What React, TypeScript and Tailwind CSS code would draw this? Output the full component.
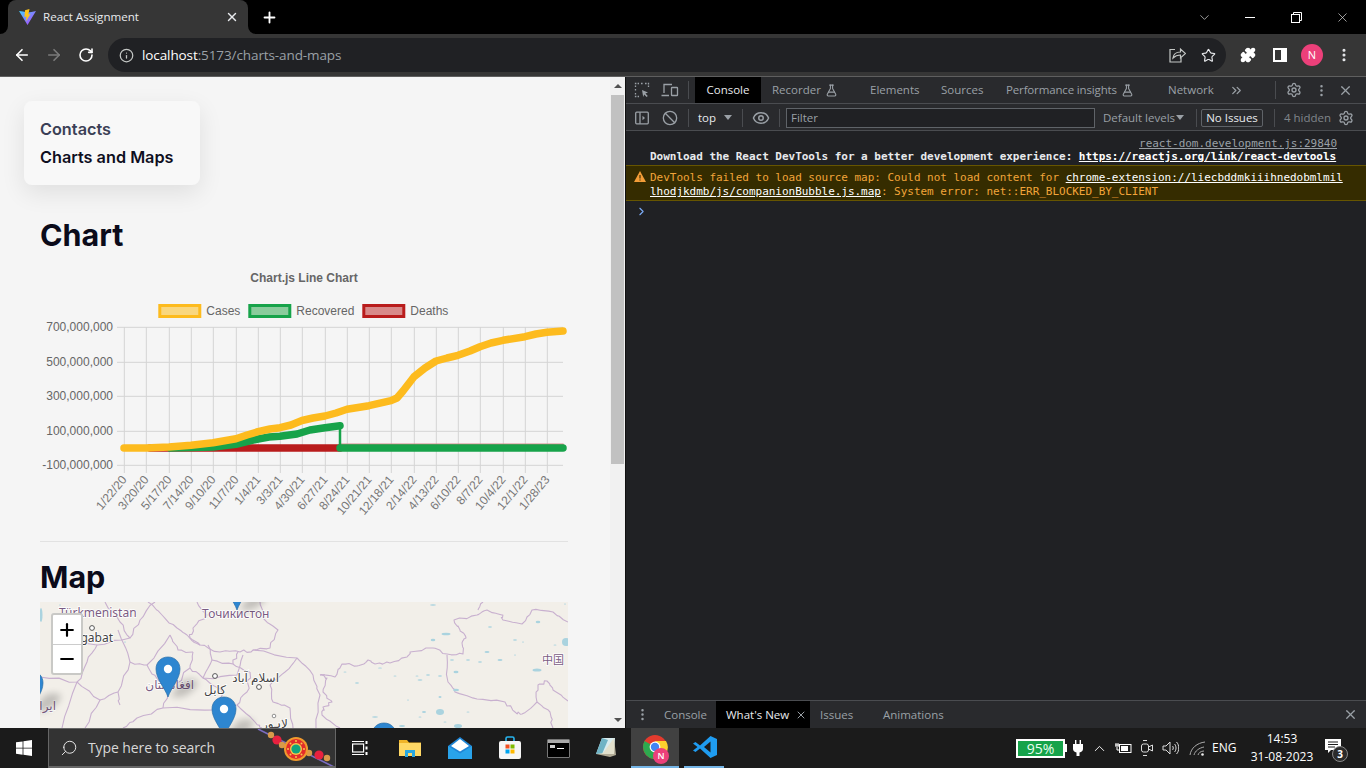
import {
  ArrowLeft,
  ArrowRight,
  Ban,
  ChevronDown,
  ChevronRight,
  ChevronUp,
  ChevronsRight,
  Eye,
  FlaskConical,
  Info,
  Minus,
  MoreVertical,
  Plus,
  Puzzle,
  RotateCw,
  Search,
  Settings,
  Star,
  X,
} from "lucide-react";

const mono = "font-['DejaVu_Sans_Mono','Liberation_Mono',monospace]";

const tickX = [124.3, 146.3, 169.3, 191.3, 213.3, 236.3, 258.3, 280.3, 302.3, 325.3, 347.3, 369.3, 391.3, 414.3, 436.3, 458.3, 480.3, 503.3, 525.3, 547.3];
const tickLabels = ["1/22/20", "3/20/20", "5/17/20", "7/14/20", "9/10/20", "11/7/20", "1/4/21", "3/3/21", "4/30/21", "6/27/21", "8/24/21", "10/21/21", "12/18/21", "2/14/22", "4/13/22", "6/10/22", "8/7/22", "10/4/22", "12/1/22", "1/28/23"];
const yTicks = [
  { y: 327.3, label: "700,000,000" },
  { y: 362.3, label: "500,000,000" },
  { y: 396.3, label: "300,000,000" },
  { y: 431.3, label: "100,000,000" },
  { y: 465.3, label: "-100,000,000" },
];
const legend = [
  { x: 158.3, label: "Cases", stroke: "#fdbb1e", fill: "#f9d77f" },
  { x: 248.3, label: "Recovered", stroke: "#17a34a", fill: "#8acc9c" },
  { x: 362.3, label: "Deaths", stroke: "#b91c1c", fill: "#d88a8a" },
];

const casesLine = "124,448 146,448 169,447 191,445.3 213,442.7 236,438.7 247,435 258,431.7 270,429 280,427.7 291,425 302,420.5 313,418 325,416 336,413 347,409.3 369,405.7 391,400.7 397,398 403,391 414,376.7 425,368 436,361 447,358 458,355.3 470,351 480,346.7 491,343 503,340.3 525,336.7 536,334 547,332.3 563,331";
const recoveredLine = "170,448 191,447.5 213,447 236,444.3 258,439 269,437 280,436.3 297,434 310,430 325,427.7 340,425.7";

function Chart() {
  return (
    <svg width="528" height="270" viewBox="40 265 528 270" className="block">
      <text x="304" y="282" textAnchor="middle" fontSize="12" fontWeight="700" fill="#666" fontFamily="Liberation Sans">
        Chart.js Line Chart
      </text>
      {legend.map((item) => (
        <g key={item.label}>
          <rect x={item.x + 1.5} y="305.5" width="40" height="11" fill={item.fill} stroke={item.stroke} strokeWidth="3" />
          <text x={item.x + 48} y="315" fontSize="12" fill="#666" fontFamily="Liberation Sans">
            {item.label}
          </text>
        </g>
      ))}
      {tickX.map((x) => (
        <line key={x} x1={x} x2={x} y1="327" y2="473" stroke="#d4d4d4" strokeWidth="1" />
      ))}
      {yTicks.map((t) => (
        <g key={t.label}>
          <line x1="117" x2="563" y1={t.y} y2={t.y} stroke="#d4d4d4" strokeWidth="1" />
          <text x="113" y={t.y + 4} textAnchor="end" fontSize="12" fill="#666" fontFamily="Liberation Sans">
            {t.label}
          </text>
        </g>
      ))}
      {tickX.map((x, i) => (
        <text key={tickLabels[i]} textAnchor="end" fontSize="12" fill="#777" fontFamily="Liberation Sans" transform={`translate(${x + 3} 480) rotate(-50)`}>
          {tickLabels[i]}
        </text>
      ))}
      <g fill="none" strokeLinecap="round" strokeLinejoin="round">
        <polyline points="150,448 340,448" stroke="#b91c1c" strokeWidth="7.5" />
        <polyline points="340,444.5 563,444.5" stroke="#d88a8a" strokeWidth="2" />
        <polyline points={recoveredLine} stroke="#17a34a" strokeWidth="7.5" />
        <polyline points="340,426 340,448" stroke="#17a34a" strokeWidth="2.5" />
        <polyline points="340,448 563,448" stroke="#17a34a" strokeWidth="7.5" />
        <polyline points={casesLine} stroke="#fdbb1e" strokeWidth="7.5" />
      </g>
    </svg>
  );
}

const borders = [
  "320,675 335,677 342,664 357,666 368,660 375,664 390,663 407,657 410,652 433,648 447,654 463,654 462,643 466,638 460,630 454,620 477,615 487,610 502,615 503,620 522,624 532,610 553,612 568,622",
  "483,602 478,610",
  "447,655 448,682 455,692 477,699 505,702 515,712 522,714 537,702 538,685 547,681 553,690 568,701",
  "537,702 550,712 553,728",
  "320,675 327,678 323,692 332,702 323,707 322,715 340,728",
  "148,602 162,615 177,628 187,635 200,645 220,652 240,652 253,650 270,648 278,630 263,618 260,602",
  "197,602 207,615 193,628 190,638 200,645",
  "118,692 130,662 147,665 170,635",
  "120,705 118,692",
  "193,652 190,668 203,678 237,675 243,655",
  "250,672 247,692 237,705 217,710 163,708 137,718 123,728",
  "253,650 297,658 313,675 320,695 316,728",
  "270,685 273,702 290,708 293,728",
  "105,602 120,622 130,638 97,645 87,662 77,682 40,677",
  "130,662 118,630",
  "77,682 62,728",
  "203,678 212,660 233,664 250,672",
  "163,708 170,690 190,668",
  "170,635 178,650 193,652",
  "147,665 158,680 170,690",
  "212,660 208,645",
  "233,664 238,652",
  "217,710 222,690 203,678",
  "237,705 255,722 262,728",
  "297,658 285,672 270,685",
  "155,602 140,620 130,638",
  "100,700 118,692",
  "60,640 97,645",
  "85,728 100,700 77,682",
];

// the borders on the tiles are never straight, so break each segment up a little
function wiggle(points: string, seed: number) {
  const pts = points.split(" ").map((p) => p.split(",").map(Number));
  const out: string[] = [];
  pts.forEach(([x, y], i) => {
    out.push(`${x},${y}`);
    const next = pts[i + 1];
    if (!next) return;
    for (let k = 1; k < 4; k++) {
      const n = Math.sin((i + 1) * 12.9898 + k * 78.233 + seed * 37.7) * 43758.5453;
      const dx = (n - Math.floor(n) - 0.5) * 3;
      const dy = (n * 3 - Math.floor(n * 3) - 0.5) * 3;
      out.push(`${x + ((next[0] - x) * k) / 4 + dx},${y + ((next[1] - y) * k) / 4 + dy}`);
    }
  });
  return out.join(" ");
}

const lakes = [
  [446, 634, 4.5, 1.3], [433, 640, 2.3, 1.2], [538, 622, 2.3, 1.3], [566, 642, 4, 4], [537, 670, 4.5, 1.6],
  [433, 605, 3, 0.8], [487, 652, 2.5, 1], [456, 672, 2.5, 1.3], [440, 676, 2, 0.8], [500, 660, 2.5, 1],
  [357, 683, 2, 0.8], [440, 712, 4, 3], [424, 712, 2, 1], [375, 717, 3, 0.8], [402, 726, 3, 1], [458, 726, 4, 2],
  [490, 627, 2, 0.8], [515, 640, 2, 0.8], [428, 675, 2, 0.8], [456, 690, 3, 1.3], [480, 662, 2, 0.8], [41, 615, 1.5, 7],
  [395, 676, 1.5, 0.6], [417, 676, 1.5, 0.6], [440, 697, 1.5, 1], [345, 672, 1.5, 0.6], [380, 668, 2, 0.6], [420, 680, 2.5, 0.7],
  [408, 700, 1, 0.6], [468, 712, 1.5, 0.6], [420, 717, 1.5, 0.6], [445, 722, 1.5, 0.6], [468, 660, 2, 0.7], [452, 660, 2, 0.7],
  [515, 655, 1, 0.6], [523, 642, 1, 0.6], [555, 645, 1.5, 0.6], [565, 604, 1, 0.6], [60, 605, 1, 0.6], [125, 642, 1, 0.6],
];

function MapPin({ x, y }: { x: number; y: number }) {
  return (
    <g transform={`translate(${x} ${y})`}>
      <path d="M2 40 L14 24 Q26 20 30 25 Q28 34 14 40 Z" fill="#000" opacity="0.2" filter="url(#pinShadow)" />
      <path d="M0 40 C-3 31 -12 22 -12 12 C-12 5 -7 0 0 0 C7 0 12 5 12 12 C12 22 3 31 0 40 Z" fill="#2e86d0" stroke="#2a6ea8" strokeWidth="0.7" />
      <circle cx="0" cy="12" r="4.2" fill="#fff" />
    </g>
  );
}

function MapLabel({ x, y, color = "#7b5c83", size = 12, anchor = "start", children }: { x: number; y: number; color?: string; size?: number; anchor?: "start" | "middle" | "end"; children: string }) {
  return (
    <text x={x} y={y} fontSize={size} fill={color} textAnchor={anchor} stroke="#fff" strokeWidth="1.5" paintOrder="stroke" fontFamily="Noto Sans, DejaVu Sans, Noto Sans CJK SC, sans-serif">
      {children}
    </text>
  );
}

function MapView() {
  return (
    <div className="relative w-[528px] h-[160px] bg-[#f2efe9]">
      <svg width="528" height="160" viewBox="40 602 528 160" className="block">
        <defs>
          <filter id="pinShadow" x="-50%" y="-50%" width="200%" height="200%">
            <feGaussianBlur stdDeviation="3.5" />
          </filter>
        </defs>
        <g fill="none" stroke="#c8b0cf" strokeWidth="1.1" strokeLinejoin="round">
          {borders.map((d, i) => (
            <polyline key={d} points={wiggle(d, i)} />
          ))}
        </g>
        <g fill="#aad3df">
          {lakes.map(([x, y, rx, ry]) => (
            <ellipse key={`${x}-${y}`} cx={x} cy={y} rx={rx} ry={ry} />
          ))}
        </g>
        <MapLabel x={59} y={617} size={12}>Türkmenistan</MapLabel>
        <MapLabel x={202} y={618} size={12}>Точикистон</MapLabel>
        <MapLabel x={113} y={642} anchor="end" color="#444">Aşgabat</MapLabel>
        <MapLabel x={194} y={689} anchor="end">افغانستان</MapLabel>
        <MapLabel x={215} y={694} anchor="middle" color="#444">کابل</MapLabel>
        <MapLabel x={279} y={682} anchor="end" color="#444">اسلام آباد</MapLabel>
        <MapLabel x={56} y={710} anchor="end">ایرا</MapLabel>
        <MapLabel x={275} y={728} anchor="middle" color="#444">لاہور</MapLabel>
        <MapLabel x={542} y={664} size={11}>中国</MapLabel>
        <circle cx="92" cy="628" r="2.4" fill="#fff" stroke="#555" strokeWidth="1" />
        <circle cx="215" cy="676" r="2.4" fill="#fff" stroke="#555" strokeWidth="1" />
        <circle cx="259" cy="687" r="2.4" fill="#fff" stroke="#555" strokeWidth="1" />
        <circle cx="274" cy="716" r="1.8" fill="#fff" stroke="#777" strokeWidth="0.8" />
        <MapPin x={237} y={570} />
        <MapPin x={168} y={657} />
        <MapPin x={224} y={697} />
        <MapPin x={384} y={723} />
        <MapPin x={31} y={671} />
      </svg>
      <div className="absolute left-[11px] top-[11px] w-[32px] h-[62px] bg-white rounded-[3px] border-2 border-[#c9c9c6] flex flex-col text-black">
        <div className="h-[30px] flex items-center justify-center border-b border-[#ccc]">
          <Plus size={20} strokeWidth={2.6} />
        </div>
        <div className="flex-1 flex items-center justify-center">
          <Minus size={20} strokeWidth={2.6} />
        </div>
      </div>
    </div>
  );
}

function Page() {
  return (
    <div className="w-[626px] h-full flex bg-[#f5f5f5] border-r border-[#111]">
      <div className="w-[610px] h-full overflow-hidden font-['Inter',sans-serif]">
        <div className="ml-6 mt-6 w-[176px] h-[84px] bg-[#f8f8f8] rounded-lg shadow-[0_8px_24px_rgba(0,0,0,0.09)] px-4 pt-[14px] text-[16.25px] font-semibold leading-[28px]">
          <div className="text-[#3b3f56]">Contacts</div>
          <div className="text-[#0f0f1e]">Charts and Maps</div>
        </div>
        <div className="ml-10 w-[528px]">
          <h1 className="mt-[30px] text-[30.5px] leading-[40px] font-bold text-[#0b0b1a]">Chart</h1>
          <div className="mt-[10px]">
            <Chart />
          </div>
          <div className="mt-[6px] border-t border-[#e2e2e2]" />
          <h2 className="mt-[15px] text-[30.5px] leading-[40px] font-bold text-[#0b0b1a]">Map</h2>
          <div className="mt-[5px]">
            <MapView />
          </div>
        </div>
      </div>
      <div className="w-[15px] h-full bg-[#f1f1f1] flex flex-col items-center">
        <div className="h-[18px] flex items-center justify-center">
          <div className="w-0 h-0 border-x-[4px] border-x-transparent border-b-[4px] border-b-[#505050]" />
        </div>
        <div className="w-[13px] h-[369px] bg-[#c1c1c1]" />
        <div className="flex-1" />
        <div className="h-[17px] flex items-center justify-center">
          <div className="w-0 h-0 border-x-[4px] border-x-transparent border-t-[4px] border-t-[#505050]" />
        </div>
      </div>
    </div>
  );
}

function Divider({ className }: { className: string }) {
  return <div className={`w-px h-[18px] bg-[#4a4c50] ${className}`} />;
}

function DevTools() {
  return (
    <div className="flex-1 h-full flex flex-col bg-[#202124] text-[#9aa0a6] font-['Open_Sans',sans-serif] text-[11.5px] min-w-0">
      <div className="h-[27px] bg-[#292a2d] border-b border-[#4a4c50] flex items-center shrink-0">
        <svg width="16" height="16" viewBox="0 0 16 16" fill="none" stroke="#9aa0a6" strokeWidth="1.3" className="ml-2">
          <path d="M1.5 5V1.5H5M7 1.5h2M11 1.5h3.5V5M1.5 7v2M1.5 11v3.5H5" strokeDasharray="1.6 1.2" />
          <path d="M8 8l6 2.4-2.6 1 2.4 2.6-1.2 1-2.4-2.6-1 2.6z" fill="#9aa0a6" stroke="none" />
        </svg>
        <svg width="18" height="16" viewBox="0 0 18 16" fill="none" stroke="#9aa0a6" strokeWidth="1.3" className="ml-[11px]">
          <path d="M3 11V2.5h8M.5 13.5H8" />
          <rect x="10.5" y="5.5" width="6" height="8" rx="0.6" />
        </svg>
        <Divider className="ml-[9px]" />
        <div className="ml-[6px] w-[66px] h-full bg-black text-[#e8eaed] flex items-center justify-center">Console</div>
        <div className="ml-[11px] w-[47px]">Recorder</div>
        <FlaskConical size={13} className="ml-[6px]" />
        <div className="ml-[32px] w-[48px]">Elements</div>
        <div className="ml-[23px] w-[42px]">Sources</div>
        <div className="ml-[23px] w-[111px] whitespace-nowrap tracking-[-0.15px]">Performance insights</div>
        <FlaskConical size={13} className="ml-[4px]" />
        <div className="ml-[34px] w-[46px]">Network</div>
        <ChevronsRight size={15} className="ml-[15px]" />
        <Divider className="ml-[31px]" />
        <Settings size={16} className="ml-[10px]" />
        <MoreVertical size={15} className="ml-[12px]" />
        <X size={15} className="ml-[9px]" />
      </div>
      <div className="h-[27px] pt-px bg-[#292a2d] border-b border-[#4a4c50] flex items-center shrink-0">
        <svg width="14" height="14" viewBox="0 0 14 14" fill="none" stroke="#9aa0a6" strokeWidth="1.3" className="ml-[9px]">
          <rect x="0.7" y="1.2" width="12.6" height="11.6" rx="1" />
          <path d="M5 1.2v11.6" />
          <path d="M7.5 4.8L10 7l-2.5 2.2z" fill="#9aa0a6" stroke="none" />
        </svg>
        <Ban size={16} className="ml-[13px]" />
        <Divider className="ml-[10px]" />
        <div className="ml-[9px] w-[20px] text-[#e8eaed]">top</div>
        <div className="ml-[6px] w-0 h-0 border-x-[4px] border-x-transparent border-t-[5px] border-t-[#9aa0a6]" />
        <Divider className="ml-[10px]" />
        <Eye size={18} className="ml-[9px]" />
        <Divider className="ml-[9px]" />
        <div className="ml-[6px] w-[309px] h-[20px] bg-[#202124] border border-[#5f6368] px-[4px] flex items-center text-[#9aa0a6]">Filter</div>
        <div className="ml-[8px] w-[71px] whitespace-nowrap">Default levels</div>
        <div className="ml-[2px] w-0 h-0 border-x-[4px] border-x-transparent border-t-[5px] border-t-[#9aa0a6]" />
        <Divider className="ml-[12px]" />
        <div className="ml-[4px] w-[62px] h-[18px] border border-[#5f6368] rounded-[2px] text-[#e8eaed] flex items-center justify-center">No Issues</div>
        <Divider className="ml-[11px]" />
        <div className="ml-[9px] w-[47px] whitespace-nowrap text-[#80868b]">4 hidden</div>
        <Settings size={16} className="ml-[7px]" />
      </div>

      <div className={`flex-1 min-h-0 ${mono} text-[11px] leading-[14px] tracking-[-0.025px]`}>
        <div className="h-[34px] pt-[6px] pl-[24px] pr-[29px]">
          <div className="h-[13px] text-right text-[#9aa0a6] underline">react-dom.development.js:29840</div>
          <div className="whitespace-nowrap font-bold text-[#e8eaed]">
            Download the React DevTools for a better development experience: <span className="underline text-white">https://reactjs.org/link/react-devtools</span>
          </div>
        </div>
        <div className="h-[36px] bg-[#352c00] border-y border-[#665500] text-[#f2a53a] pl-[24px] pt-[5px] relative">
          <svg width="12" height="11" viewBox="0 0 12 11" className="absolute left-[8px] top-[5px]">
            <path d="M6 0l6 11H0z" fill="#f29d38" />
            <path d="M5.4 4h1.2v3.6H5.4zM5.4 8.4h1.2v1.2H5.4z" fill="#3c3000" />
          </svg>
          <div className="whitespace-nowrap">
            DevTools failed to load source map: Could not load content for <span className="underline text-white">chrome-extension://liecbddmkiiihnedobmlmil</span>
          </div>
          <div className="whitespace-nowrap">
            <span className="underline text-white">lhodjkdmb/js/companionBubble.js.map</span>: System error: net::ERR_BLOCKED_BY_CLIENT
          </div>
        </div>
        <div className="pl-[9px] pt-[4px] text-[#7cacf8]">
          <ChevronRight size={13} />
        </div>
      </div>

      <div className="h-[28px] bg-[#292a2d] border-t border-[#4a4c50] flex items-center shrink-0">
        <MoreVertical size={15} className="ml-[9px]" />
        <div className="ml-[14px] w-[42px]">Console</div>
        <div className="ml-[10px] w-[94px] h-full bg-black text-[#e8eaed] flex items-center pl-[10px] whitespace-nowrap">
          What's New
          <X size={12} className="ml-[6px] text-[#9aa0a6]" />
        </div>
        <div className="ml-[10px] w-[31px]">Issues</div>
        <div className="ml-[32px] w-[60px]">Animations</div>
        <X size={15} className="ml-[400px]" />
      </div>
    </div>
  );
}

function ChromeBar() {
  return (
    <>
      <div className="h-[34px] bg-black flex items-end shrink-0 font-['Open_Sans',sans-serif] text-white">
        <div className="relative ml-2 w-[240px] h-[34px] bg-[#363636] rounded-t-lg flex items-center pl-[11px]">
          <svg width="17" height="16" viewBox="0 0 17 16">
            <defs>
              <linearGradient id="viteBody" x1="0" y1="0" x2="1" y2="1">
                <stop offset="0" stopColor="#41d1ff" />
                <stop offset="1" stopColor="#bd34fe" />
              </linearGradient>
            </defs>
            <path d="M0 2l8.5 14L17 2l-4.5 1L8.5 3.5 4 2.5z" fill="url(#viteBody)" />
            <path d="M10.5 0L6 1.2 5.5 8l2-.4-.6 4.6L11.5 5l-2.2.4z" fill="#ffc517" />
          </svg>
          <span className="ml-[7px] text-[11.6px] text-[#e8eaed] whitespace-nowrap">React Assignment</span>
          <X size={14} strokeWidth={2.4} className="absolute left-[217px] text-[#e8eaed]" />
          <div className="absolute -left-2 bottom-0 w-2 h-2 bg-[#363636]">
            <div className="w-2 h-2 bg-black rounded-br-lg" />
          </div>
          <div className="absolute -right-2 bottom-0 w-2 h-2 bg-[#363636]">
            <div className="w-2 h-2 bg-black rounded-bl-lg" />
          </div>
        </div>
        <Plus size={17} strokeWidth={2.6} className="ml-[13px] mb-[8px]" />
        <div className="flex-1" />
        <div className="h-[34px] flex items-center text-[#e0e0e0]">
          <ChevronDown size={15} strokeWidth={1.1} className="mr-[33px]" />
          <div className="w-[10px] h-px bg-white mr-[36px]" />
          <svg width="11" height="11" viewBox="0 0 11 11" fill="none" stroke="#fff" strokeWidth="1" className="mr-[33px]">
            <rect x="0.5" y="2.5" width="8" height="8" />
            <path d="M2.5 2.5V.5h8v8h-2" />
          </svg>
          <X size={15} strokeWidth={1.1} className="mr-[16px]" />
        </div>
      </div>
      <div className="h-[43px] bg-[#363636] border-b border-[#5f5f5f] flex items-center shrink-0 font-['Open_Sans',sans-serif]">
        <ArrowLeft size={18} strokeWidth={2.2} className="ml-[13px] text-white" />
        <ArrowRight size={18} strokeWidth={2.2} className="ml-[14px] text-[#7b7b7b]" />
        <RotateCw size={16} strokeWidth={2.4} className="ml-[15px] text-white" />
        <div className="ml-[14px] w-[1118px] h-[34px] rounded-full bg-[#202124] flex items-center">
          <Info size={15} className="ml-[11px] text-[#c4c7c5]" />
          <div className="ml-[8px] text-[13.5px] tracking-[-0.1px] text-[#9aa0a6] whitespace-nowrap">
            <span className="text-white">localhost</span>:5173/charts-and-maps
          </div>
          <div className="flex-1" />
          <svg width="17" height="16" viewBox="0 0 17 16" fill="none" stroke="#c4c7c5" strokeWidth="1.2">
            <path d="M6 2.5H1v12.5h11v-4" />
            <path d="M4 11c.5-4 3.5-6 7.5-6V2l5 4.5-5 4.5V8c-3 0-5.5 1-7.5 3z" />
          </svg>
          <Star size={15} strokeWidth={1.8} className="ml-[15px] mr-[10px] text-[#e8eaed]" />
        </div>
        <Puzzle size={16} fill="#fff" className="ml-[14px] text-white" />
        <svg width="14" height="14" viewBox="0 0 14 14" className="ml-[17px]">
          <rect x="0" y="0" width="14" height="14" fill="#fff" />
          <rect x="2" y="2" width="6" height="10" fill="#363636" />
        </svg>
        <div className="ml-[14px] w-[22px] h-[22px] rounded-full bg-[#ec407a] text-white text-[11px] flex items-center justify-center">N</div>
        <MoreVertical size={16} strokeWidth={2.6} className="ml-[13px] text-[#e8eaed]" />
      </div>
    </>
  );
}

function Rakhi() {
  return (
    <svg width="80" height="40" viewBox="256 728 80 40" className="absolute left-[208px] top-0">
      <path d="M257 728 L335 767" stroke="#7a6cc0" strokeWidth="1.6" fill="none" />
      <circle cx="270" cy="734" r="3.2" fill="#d89a4a" />
      <circle cx="276" cy="739" r="4.6" fill="#e8213f" />
      <circle cx="281" cy="744" r="3.2" fill="#d89a4a" />
      <circle cx="308" cy="752" r="3.2" fill="#d89a4a" />
      <circle cx="318" cy="754" r="4.6" fill="#e8213f" />
      <circle cx="326" cy="757" r="3.2" fill="#d89a4a" />
      <circle cx="295" cy="748" r="12" fill="#f09a2e" />
      <circle cx="295" cy="748" r="10" fill="#e22b2b" />
      <g fill="#f7c64a">
        <circle cx="295" cy="740" r="1" />
        <circle cx="295" cy="756" r="1" />
        <circle cx="287" cy="748" r="1" />
        <circle cx="303" cy="748" r="1" />
        <circle cx="289.5" cy="742.5" r="1" />
        <circle cx="300.5" cy="742.5" r="1" />
        <circle cx="289.5" cy="753.5" r="1" />
        <circle cx="300.5" cy="753.5" r="1" />
      </g>
      <circle cx="295" cy="748" r="6" fill="#f7c64a" />
      <circle cx="295" cy="748" r="4.6" fill="#12a37c" />
    </svg>
  );
}

function Taskbar() {
  return (
    <div className="h-[40px] bg-[#1b1b1b] flex items-center shrink-0 text-white font-['Open_Sans',sans-serif]">
      <svg width="16" height="16" viewBox="0 0 16 16" fill="#fff" className="ml-[16px]">
        <path d="M0 2.3l6.6-.9v6.3H0zM7.4 1.3L16 0v7.7H7.4zM0 8.4h6.6v6.3L0 13.8zM7.4 8.4H16V16l-8.6-1.2z" />
      </svg>
      <div className="relative ml-[16px] w-[288px] h-[40px] bg-[#333] border border-[#666] border-b-2 flex items-center overflow-hidden">
        <Search size={18} strokeWidth={1.3} className="ml-[11px] -scale-x-100 text-[#e6e6e6]" />
        <span className="ml-[10px] text-[14px] tracking-[-0.1px] text-[#d8d8d8] whitespace-nowrap">Type here to search</span>
        <Rakhi />
      </div>
      <svg width="16" height="16" viewBox="0 0 16 16" fill="none" stroke="#fff" strokeWidth="1.2" className="ml-[16px]">
        <rect x="0.6" y="4" width="11" height="8" />
        <path d="M0 1.5h12M0 14.5h12" />
        <path d="M14.5 1v3M14.5 6.5v3M14.5 12v3" strokeWidth="2" />
      </svg>
      <div className="ml-[18px] w-[48px] flex justify-center">
        <svg width="22" height="20" viewBox="0 0 22 20">
          <path d="M0 2h8l2 2.5h12V18H0z" fill="#f0b429" />
          <rect x="0" y="5" width="22" height="13" fill="#ffd865" />
          <path d="M6 19v-7h10v7h-3v-4H9v4z" fill="#2aa7e0" />
        </svg>
      </div>
      <div className="ml-[2px] w-[48px] flex justify-center">
        <svg width="24" height="22" viewBox="0 0 24 22">
          <path d="M12 0l12 9v13H0V9z" fill="#1f86d6" />
          <path d="M12 2L21 9l-9 5.5L3 9z" fill="#fff" />
          <path d="M0 9l12 7.5L24 9v13H0z" fill="#29a3ea" />
        </svg>
      </div>
      <div className="ml-[2px] w-[48px] flex justify-center">
        <svg width="24" height="24" viewBox="0 0 24 24">
          <path d="M8 6V2.5a1.5 1.5 0 011.5-1.5h5A1.5 1.5 0 0116 2.5V6" fill="none" stroke="#27b4ee" strokeWidth="1.6" />
          <rect x="1" y="5" width="22" height="18" rx="2" fill="#f6f6f6" />
          <rect x="7.5" y="8.5" width="4" height="4" fill="#f25022" />
          <rect x="12.5" y="8.5" width="4" height="4" fill="#7fba00" />
          <rect x="7.5" y="13.5" width="4" height="4" fill="#00a4ef" />
          <rect x="12.5" y="13.5" width="4" height="4" fill="#ffb900" />
        </svg>
      </div>
      <div className="w-[48px] flex justify-center">
        <div className="w-[23px] h-[19px] bg-black border border-[#777] rounded-[1px] relative overflow-hidden">
          <div className="h-[3px] bg-[#aaa]" />
          <div className="absolute left-[2px] top-[5px] w-[5px] h-[3px] bg-[#ccc]" />
          <div className="absolute left-[9px] top-[8px] w-[7px] h-px bg-white" />
        </div>
      </div>
      <div className="ml-[1px] w-[46px] flex justify-center">
        <svg width="22" height="22" viewBox="0 0 22 22">
          <path d="M7 1h13l-1 16H1z" fill="#d9ecef" />
          <path d="M7 1L1 17h6l6-14z" fill="#6fb3c5" />
          <path d="M19 1l2 17-6 2-14-3 7-1z" fill="#e4dcc0" opacity="0.75" />
        </svg>
      </div>
      <div className="ml-[2px] w-[48px] h-[40px] bg-[#414141] border-b-2 border-[#75b5e6] relative flex items-center justify-center">
        <svg width="26" height="26" viewBox="0 0 26 26">
          <circle cx="13" cy="13" r="12" fill="#e33b2e" />
          <path d="M13 13L2.6 7A12 12 0 001 13a12 12 0 0010.5 11.9z" fill="#2da94f" />
          <path d="M13 7h11a12 12 0 01-12.5 18L17 15z" fill="#fdd12e" />
          <circle cx="13" cy="13" r="5.4" fill="#fff" />
          <circle cx="13" cy="13" r="4.2" fill="#4285f4" />
        </svg>
        <div className="absolute left-[22px] top-[20px] w-[16px] h-[16px] rounded-full bg-[#ec407a] text-white text-[9px] font-semibold flex items-center justify-center">N</div>
      </div>
      <div className="ml-[5px] w-[40px] h-[40px] border-b-2 border-[#75b5e6] flex items-center justify-center">
        <svg width="24" height="24" viewBox="0 0 24 24" className="ml-[2px]">
          <path d="M17.5 1L24 4v16l-6.5 3L7 13.5 2.5 17 0 15.5 4.5 12 0 8.5 2.5 7 7 10.5z" fill="#1f9cf0" />
          <path d="M17.5 6.5L11 12l6.5 5.5z" fill="#1b1b1b" />
        </svg>
      </div>
      <div className="flex-1" />
      <div className="w-[49px] h-[19px] border-2 border-white bg-[#16a34a] text-[14px] leading-[15px] text-center text-[#e9fff0]">95%</div>
      <div className="w-[2px] h-[8px] bg-white" />
      <svg width="10" height="16" viewBox="0 0 10 16" fill="#fff" className="ml-[6px]">
        <path d="M2 0h1.4v4H6.6V0H8v4h2v5c0 2-1.5 3.2-3.5 3.4V16h-3v-3.6C1.5 12.2 0 11 0 9V4h2z" />
      </svg>
      <ChevronUp size={17} strokeWidth={1.3} className="ml-[8px]" />
      <svg width="17" height="12" viewBox="0 0 17 12" className="ml-[7px]">
        <rect x="4.5" y="2.5" width="11.5" height="8" fill="none" stroke="#fff" />
        <rect x="6" y="4" width="7" height="5" fill="#fff" />
        <path d="M0 3h4M1 1v4M3 1v4M2 5v3h3" stroke="#fff" fill="none" />
      </svg>
      <svg width="14" height="18" viewBox="0 0 14 18" fill="none" stroke="#ddd" strokeWidth="1" className="ml-[8px]">
        <rect x="1.5" y="5" width="7" height="8" rx="2" />
        <path d="M8.5 8l4-2v6l-4-2M3 1.5h4M3 16.5h4" />
      </svg>
      <svg width="17" height="14" viewBox="0 0 17 14" fill="none" stroke="#ddd" strokeWidth="1" className="ml-[8px]">
        <path d="M1 5h3l4-4v12l-4-4H1zM10.5 5c1 1 1 3 0 4M12.5 3c2 2 2 6 0 8M14.5 1c3 3 3 9 0 12" />
      </svg>
      <svg width="17" height="15" viewBox="0 0 17 15" fill="none" stroke="#aaa" strokeWidth="1" className="ml-[10px]">
        <path d="M1 14C2 7 8 2 16 1M5 14c1-4 5-7 10-8M9 14c.6-2 2.6-4 6-4" />
        <circle cx="13.5" cy="13.5" r="1.3" fill="#eee" stroke="none" />
      </svg>
      <div className="ml-[6px] w-[28px] text-[12px]">ENG</div>
      <div className="ml-[10px] w-[64px] text-center text-[12px] leading-[18px]">
        <div>14:53</div>
        <div>31-08-2023</div>
      </div>
      <div className="relative ml-[11px] w-[17px] h-[16px] mr-[24px] mb-[2px]">
        <svg width="17" height="16" viewBox="0 0 17 16" fill="#fff">
          <path d="M0 0h16v11H6l-3 3v-3H0z" />
          <path d="M3 3h10M3 5.5h10M3 8h7" stroke="#1b1b1b" strokeWidth="1" />
        </svg>
        <div className="absolute left-[7px] top-[7px] w-[16px] h-[16px] rounded-full bg-[#2b2b2b] border border-[#888] text-[10px] font-bold flex items-center justify-center">3</div>
      </div>
    </div>
  );
}

export default function App() {
  return (
    <div className="w-[1366px] h-[768px] overflow-hidden flex flex-col bg-black">
      <ChromeBar />
      <div className="flex-1 min-h-0 flex">
        <Page />
        <DevTools />
      </div>
      <Taskbar />
    </div>
  );
}
